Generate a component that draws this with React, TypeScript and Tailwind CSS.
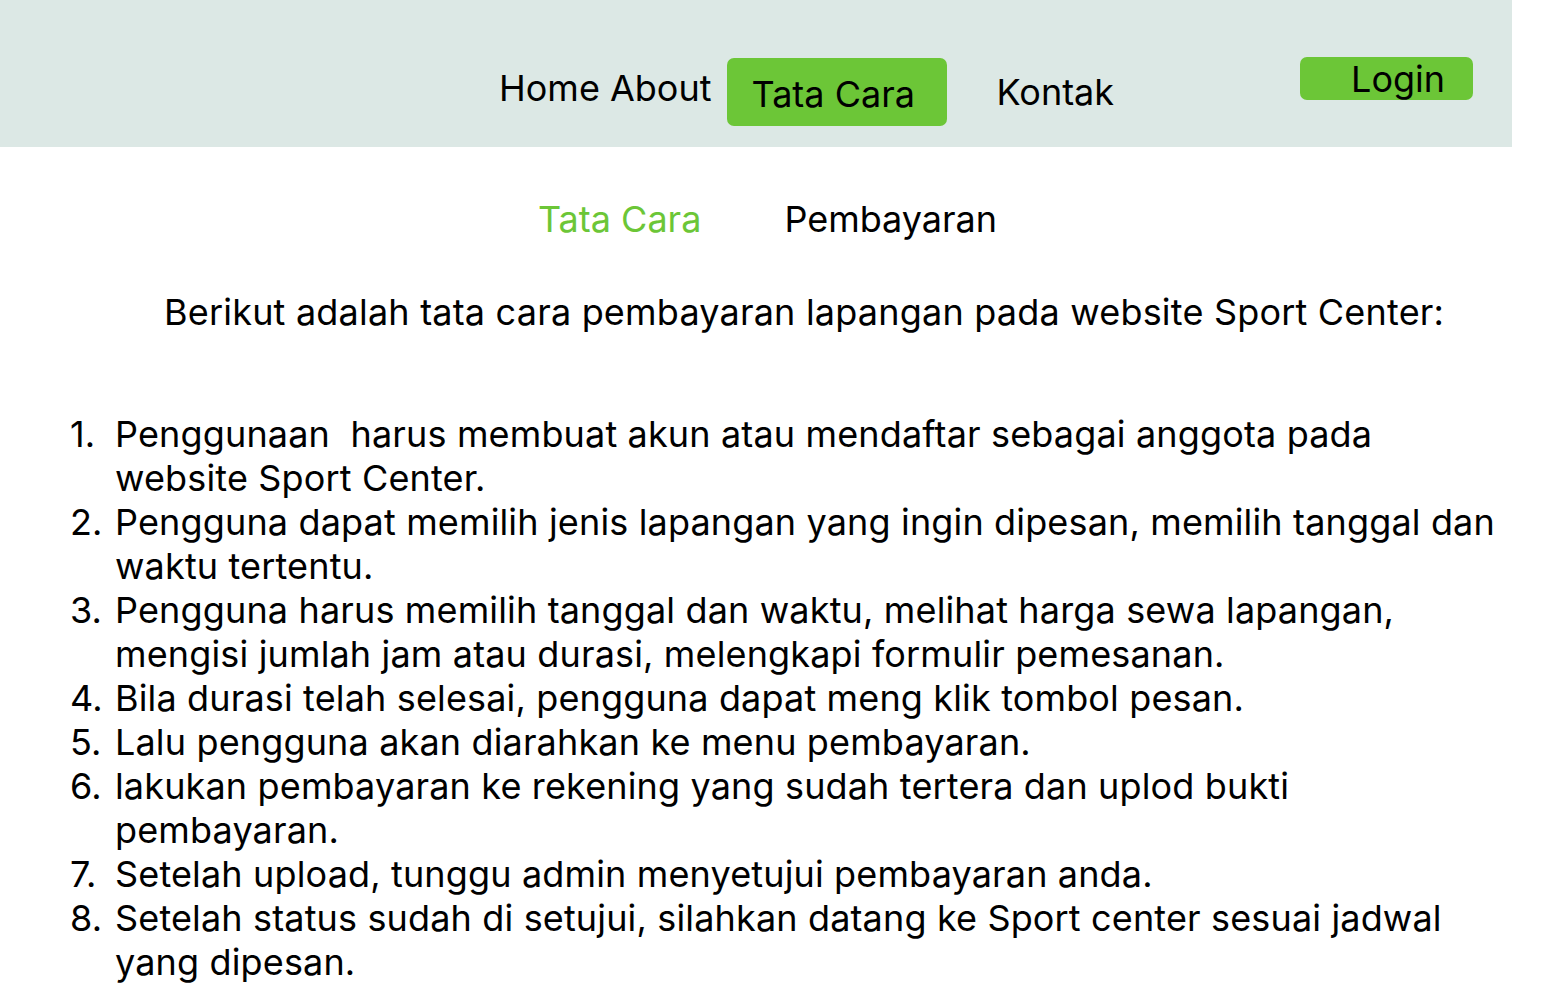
import React from "react";

const items = [
  ["Penggunaan\u00a0 harus membuat akun atau mendaftar sebagai anggota pada", "website Sport Center."],
  ["Pengguna dapat memilih jenis lapangan yang ingin dipesan, memilih tanggal dan", "waktu tertentu."],
  ["Pengguna harus memilih tanggal dan waktu, melihat harga sewa lapangan,", "mengisi jumlah jam atau durasi, melengkapi formulir pemesanan."],
  ["Bila durasi telah selesai, pengguna dapat meng klik tombol pesan."],
  ["Lalu pengguna akan diarahkan ke menu pembayaran."],
  ["lakukan pembayaran ke rekening yang sudah tertera dan uplod bukti", "pembayaran."],
  ["Setelah upload, tunggu admin menyetujui pembayaran anda."],
  ["Setelah status sudah di setujui, silahkan datang ke Sport center sesuai jadwal", "yang dipesan."],
];

export default function App() {
  return (
    <div className="w-[1558px] min-h-[983px] bg-white text-black pb-[2px]" style={{ fontFamily: "Inter, 'Noto Sans', sans-serif" }}>
      <header className="w-[1512px] h-[147px] bg-[#dce8e5] relative">
        <div className="flex items-start pt-[58px] pl-[499px]">
          <span className="text-[36px] leading-[44px] mt-[8px]">Home About</span>
          <span className="ml-[15px] w-[220px] h-[68px] rounded-[7px] bg-[#6cc637] text-[36px] pl-[25px] pt-[10px] leading-[52px]">Tata Cara</span>
          <span className="ml-[50px] text-[36px] leading-[44px] mt-[12px]">Kontak</span>
          <span className="ml-[186px] w-[173px] h-[43px] rounded-[7px] bg-[#6cc637] text-[36px] leading-[44px] pl-[51px] -mt-[1px]">Login</span>
        </div>
      </header>
      <div className="flex pl-[538px] mt-[50px] text-[36px] leading-[44px]">
        <span className="text-[#6cc637]">Tata Cara</span>
        <span className="ml-[83px]">Pembayaran</span>
      </div>
      <p className="pl-[164px] mt-[49px] text-[36px] leading-[44px] tracking-[0.2px] whitespace-nowrap">Berikut adalah tata cara pembayaran lapangan pada website Sport Center:</p>
      <ol className="mt-[78px] pl-[70px] text-[36px] leading-[44px] tracking-[0.15px]">
        {items.map((lines, i) => (
          <li key={i} className="flex">
            <span className="w-[45px] shrink-0">{i + 1}.</span>
            <span>
              {lines.map((l, j) => (
                <span key={j} className="block whitespace-pre">{l}</span>
              ))}
            </span>
          </li>
        ))}
      </ol>
    </div>
  );
}
